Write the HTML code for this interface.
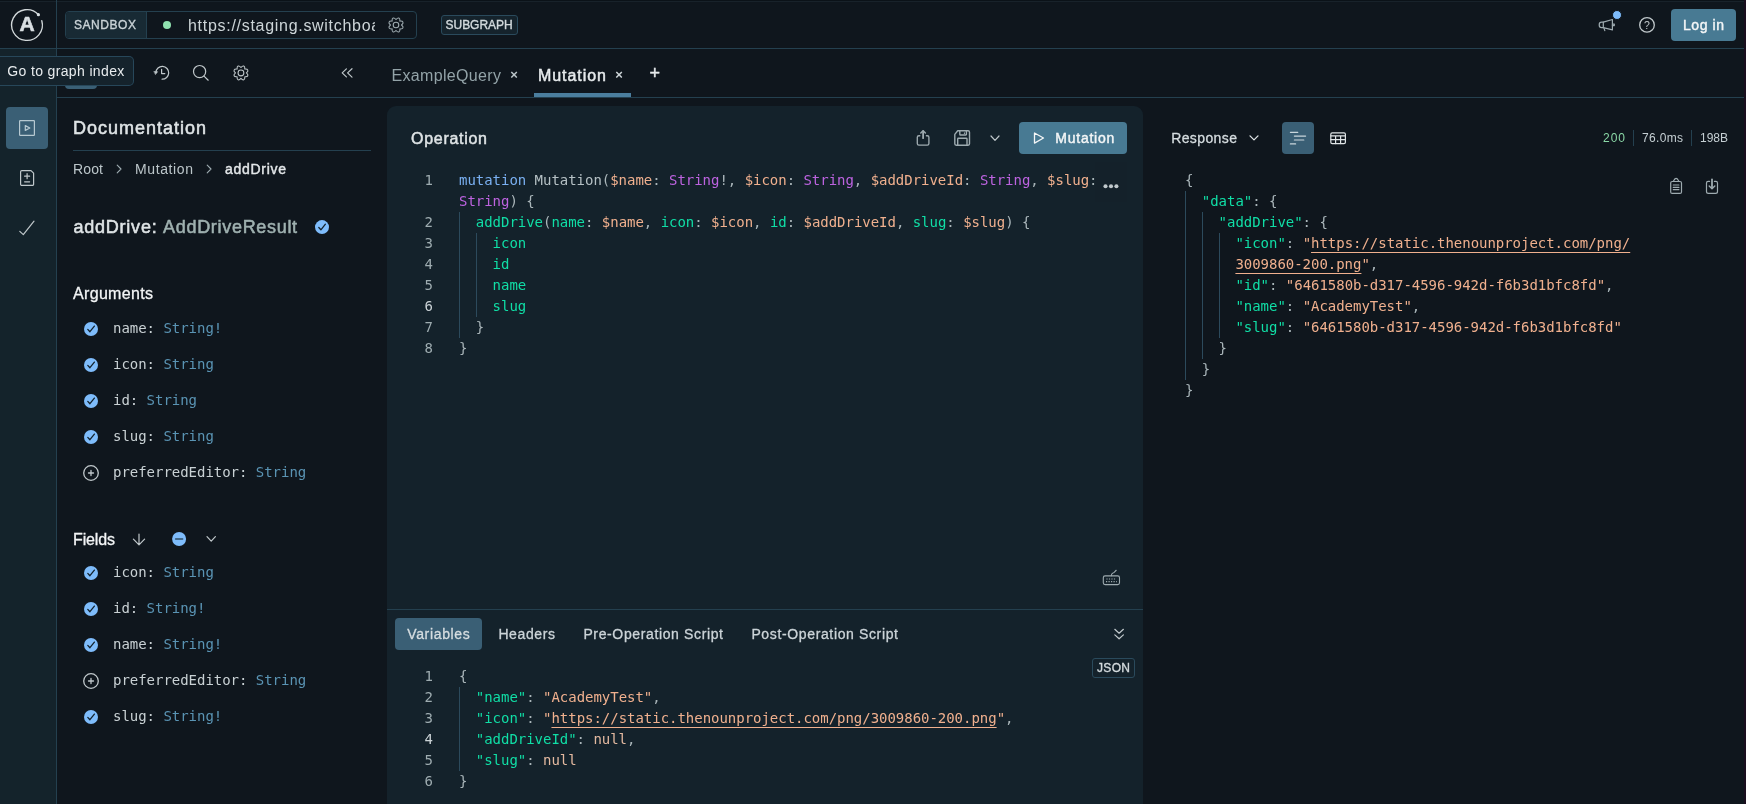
<!DOCTYPE html>
<html lang="en"><head><meta charset="utf-8"><title>Apollo Sandbox</title>
<style>
html,body{margin:0;padding:0}
body{width:1746px;height:804px;overflow:hidden;position:relative;background:#0f161d;font-family:"Liberation Sans", sans-serif}
#root{position:absolute;left:0;top:0;width:1746px;height:804px;will-change:transform}
#root>div,#root>svg,.ab{position:absolute}
.t{white-space:pre}
.code{font-family:"DejaVu Sans Mono", "Liberation Mono", monospace;font-size:14px;line-height:21px;white-space:pre;height:21px;letter-spacing:-0.029px}
.code span{font-family:inherit}
.u{text-decoration:underline;text-decoration-thickness:1px;text-underline-offset:3.5px}
</style></head><body><div id="root">
<div style="left:0px;top:0px;width:1744px;height:1px;background:#0b1218;"></div>
<div style="left:0px;top:1px;width:1744px;height:1px;background:#18222a;"></div>
<div style="left:1744px;top:0px;width:2px;height:804px;background:#1a0e1e;"></div>
<div style="left:0px;top:49px;width:56px;height:755px;background:#14232b;"></div>
<div style="left:56px;top:0px;width:1px;height:804px;background:#24404f;"></div>
<div style="left:0px;top:48px;width:1744px;height:1px;background:#24404f;"></div>
<div style="left:57px;top:97px;width:1687px;height:1px;background:#24404f;"></div>
<div style="left:387px;top:106px;width:756px;height:698px;background:#14222b;border-radius:9px 9px 0 0;"></div>
<div style="left:387px;top:609px;width:756px;height:1px;background:#24404f;"></div>
<div style="left:65px;top:11px;width:352px;height:28px;border:1px solid #24404f;box-sizing:border-box;border-radius:4px;"></div>
<div style="left:66px;top:12px;width:80px;height:26px;background:#182a34;border-radius:3px 0 0 3px;"></div>
<div style="left:146px;top:12px;width:1px;height:26px;background:#24404f;"></div>
<div class="t" style='left:74px;top:16.0px;height:18px;line-height:18px;font-family:"Liberation Sans", sans-serif;font-size:12px;font-weight:400;color:#c9d2d6;-webkit-text-stroke:0.36px #c9d2d6;letter-spacing:0.552px;'>SANDBOX</div>
<div style="left:162.8px;top:20.9px;width:8.4px;height:8.4px;background:#90e2b0;border-radius:5px;"></div>
<div class="t" style='left:188px;top:13.899999999999999px;height:24px;line-height:24px;font-family:"Liberation Sans", sans-serif;font-size:16px;font-weight:400;color:#cdd5d8;letter-spacing:0.708px;width:187.4px;overflow:hidden;'>https://staging.switchboa</div>
<div style="left:441px;top:15px;width:77px;height:20px;background:#15232c;border:1px solid #2a4a5c;box-sizing:border-box;border-radius:3px;"></div>
<div class="t" style='left:445.6px;top:16.2px;height:18px;line-height:18px;font-family:"Liberation Sans", sans-serif;font-size:12px;font-weight:400;color:#d3dadd;-webkit-text-stroke:0.36px #d3dadd;letter-spacing:-0.051px;'>SUBGRAPH</div>
<div style="left:1671px;top:9px;width:65px;height:32px;background:#487a93;border-radius:4px;"></div>
<div class="t" style='left:1683px;top:14.5px;height:21px;line-height:21px;font-family:"Liberation Sans", sans-serif;font-size:14px;font-weight:400;color:#f4f6f7;-webkit-text-stroke:0.42px #f4f6f7;letter-spacing:0.569px;'>Log in</div>
<div style="left:1613px;top:11px;width:8px;height:8px;background:#7ebcfb;border-radius:4px;"></div>
<div style="left:65px;top:60px;width:32px;height:29px;background:#3a5f75;border-radius:4px;"></div>
<div style="left:0px;top:56px;width:134px;height:30px;background:#15232c;border:1px solid #27475a;box-sizing:border-box;border-radius:4px;border-left:none;border-radius:0 5px 5px 0;"></div>
<div class="t" style='left:7.3px;top:61.0px;height:21px;line-height:21px;font-family:"Liberation Sans", sans-serif;font-size:14px;font-weight:400;color:#e8ecee;letter-spacing:0.356px;'>Go to graph index</div>
<div class="t" style='left:391.5px;top:63.900000000000006px;height:24px;line-height:24px;font-family:"Liberation Sans", sans-serif;font-size:16px;font-weight:400;color:#93a3a8;letter-spacing:0.334px;'>ExampleQuery</div>
<div class="t" style='left:510.3px;top:64.9px;height:20px;line-height:20px;font-family:"Liberation Sans", sans-serif;font-size:13px;font-weight:700;color:#bcc6ca;'>×</div>
<div class="t" style='left:538px;top:63.900000000000006px;height:24px;line-height:24px;font-family:"Liberation Sans", sans-serif;font-size:16px;font-weight:400;color:#e6eaec;-webkit-text-stroke:0.48px #e6eaec;letter-spacing:0.946px;'>Mutation</div>
<div class="t" style='left:615.3px;top:64.9px;height:20px;line-height:20px;font-family:"Liberation Sans", sans-serif;font-size:13px;font-weight:700;color:#cfd6d9;'>×</div>
<div class="t" style='left:649.5px;top:60.0px;height:27px;line-height:27px;font-family:"Liberation Sans", sans-serif;font-size:18px;font-weight:400;color:#e6eaec;-webkit-text-stroke:0.40px #e6eaec;'>+</div>
<div style="left:534px;top:93px;width:97px;height:4px;background:#4b7e9e;"></div>
<div style="left:6px;top:107px;width:42px;height:42px;background:#3a5f75;border-radius:4px;"></div>
<div class="t" style='left:73px;top:114.5px;height:27px;line-height:27px;font-family:"Liberation Sans", sans-serif;font-size:18px;font-weight:400;color:#dfe4e6;-webkit-text-stroke:0.54px #dfe4e6;letter-spacing:0.993px;'>Documentation</div>
<div style="left:73px;top:150px;width:298px;height:1px;background:#24404f;"></div>
<div class="t" style='left:73px;top:158.5px;height:21px;line-height:21px;font-family:"Liberation Sans", sans-serif;font-size:14px;font-weight:400;color:#bcc6ca;letter-spacing:0.141px;'>Root</div>
<div class="t" style='left:135px;top:158.5px;height:21px;line-height:21px;font-family:"Liberation Sans", sans-serif;font-size:14px;font-weight:400;color:#bcc6ca;letter-spacing:0.614px;'>Mutation</div>
<div class="t" style='left:225px;top:158.5px;height:21px;line-height:21px;font-family:"Liberation Sans", sans-serif;font-size:14px;font-weight:400;color:#e3e7e9;-webkit-text-stroke:0.42px #e3e7e9;letter-spacing:0.710px;'>addDrive</div>
<div class="t" style='left:73.4px;top:213.5px;height:27px;line-height:27px;font-family:"Liberation Sans", sans-serif;font-size:18px;font-weight:400;color:#dfe4e6;-webkit-text-stroke:0.54px #dfe4e6;letter-spacing:0.782px;'>addDrive:</div>
<div class="t" style='left:163.1px;top:213.5px;height:27px;line-height:27px;font-family:"Liberation Sans", sans-serif;font-size:18px;font-weight:400;color:#9fb1b0;-webkit-text-stroke:0.54px #9fb1b0;letter-spacing:0.688px;'>AddDriveResult</div>
<div class="t" style='left:73px;top:281.8px;height:24px;line-height:24px;font-family:"Liberation Sans", sans-serif;font-size:16px;font-weight:400;color:#f3f5f6;letter-spacing:0.328px;-webkit-text-stroke:0.3px #f3f5f6;'>Arguments</div>
<div class="t" style='left:73px;top:527.8px;height:24px;line-height:24px;font-family:"Liberation Sans", sans-serif;font-size:16px;font-weight:400;color:#f3f5f6;letter-spacing:-0.138px;-webkit-text-stroke:0.3px #f3f5f6;'>Fields</div>
<div class="t" style='left:411px;top:126.9px;height:24px;line-height:24px;font-family:"Liberation Sans", sans-serif;font-size:16px;font-weight:400;color:#dfe4e6;-webkit-text-stroke:0.48px #dfe4e6;letter-spacing:0.717px;'>Operation</div>
<div style="left:1019px;top:122px;width:108px;height:32px;background:#487a93;border-radius:4px;"></div>
<div class="t" style='left:1055.3px;top:127.80000000000001px;height:21px;line-height:21px;font-family:"Liberation Sans", sans-serif;font-size:14px;font-weight:400;color:#f4f6f7;-webkit-text-stroke:0.42px #f4f6f7;letter-spacing:0.757px;'>Mutation</div>
<div style="left:395px;top:618px;width:87px;height:32px;background:#3a5f75;border-radius:4px;"></div>
<div class="t" style='left:407.2px;top:623.7px;height:21px;line-height:21px;font-family:"Liberation Sans", sans-serif;font-size:14px;font-weight:400;color:#d5dde0;-webkit-text-stroke:0.31px #d5dde0;letter-spacing:0.659px;'>Variables</div>
<div class="t" style='left:498.4px;top:623.7px;height:21px;line-height:21px;font-family:"Liberation Sans", sans-serif;font-size:14px;font-weight:400;color:#ccd4d8;-webkit-text-stroke:0.31px #ccd4d8;letter-spacing:0.613px;'>Headers</div>
<div class="t" style='left:583.4px;top:623.7px;height:21px;line-height:21px;font-family:"Liberation Sans", sans-serif;font-size:14px;font-weight:400;color:#ccd4d8;-webkit-text-stroke:0.31px #ccd4d8;letter-spacing:0.631px;'>Pre-Operation Script</div>
<div class="t" style='left:751.4px;top:623.7px;height:21px;line-height:21px;font-family:"Liberation Sans", sans-serif;font-size:14px;font-weight:400;color:#ccd4d8;-webkit-text-stroke:0.31px #ccd4d8;letter-spacing:0.638px;'>Post-Operation Script</div>
<div style="left:1092px;top:658px;width:43px;height:20px;border:1px solid #2a4a5c;box-sizing:border-box;border-radius:3px;"></div>
<div class="t" style='left:1097px;top:659.0px;height:18px;line-height:18px;font-family:"Liberation Sans", sans-serif;font-size:12px;font-weight:400;color:#d3dadd;-webkit-text-stroke:0.36px #d3dadd;letter-spacing:0.328px;'>JSON</div>
<div class="t" style='left:1171.2px;top:127.69999999999999px;height:21px;line-height:21px;font-family:"Liberation Sans", sans-serif;font-size:14px;font-weight:400;color:#d5dcdf;-webkit-text-stroke:0.31px #d5dcdf;letter-spacing:0.393px;'>Response</div>
<div style="left:1282px;top:122px;width:32px;height:32px;background:#3a5f75;border-radius:4px;"></div>
<div class="t" style='left:1603px;top:129.0px;height:18px;line-height:18px;font-family:"Liberation Sans", sans-serif;font-size:12px;font-weight:400;color:#8ad8a6;letter-spacing:0.984px;'>200</div>
<div style="left:1633px;top:130px;width:1px;height:16px;background:#24404f;"></div>
<div class="t" style='left:1642px;top:129.0px;height:18px;line-height:18px;font-family:"Liberation Sans", sans-serif;font-size:12px;font-weight:400;color:#c5cfd3;letter-spacing:0.328px;'>76.0ms</div>
<div style="left:1691px;top:130px;width:1px;height:16px;background:#24404f;"></div>
<div class="t" style='left:1700px;top:129.0px;height:18px;line-height:18px;font-family:"Liberation Sans", sans-serif;font-size:12px;font-weight:400;color:#c5cfd3;letter-spacing:-0.010px;'>198B</div>
<div class="code" style="left:403px;width:30px;text-align:right;top:169.5px;color:#9eacb0">1</div>
<div class="code" style="left:403px;width:30px;text-align:right;top:211.5px;color:#9eacb0">2</div>
<div class="code" style="left:403px;width:30px;text-align:right;top:232.5px;color:#9eacb0">3</div>
<div class="code" style="left:403px;width:30px;text-align:right;top:253.5px;color:#9eacb0">4</div>
<div class="code" style="left:403px;width:30px;text-align:right;top:274.5px;color:#9eacb0">5</div>
<div class="code" style="left:403px;width:30px;text-align:right;top:295.5px;color:#cbd3d6">6</div>
<div class="code" style="left:403px;width:30px;text-align:right;top:316.5px;color:#9eacb0">7</div>
<div class="code" style="left:403px;width:30px;text-align:right;top:337.5px;color:#9eacb0">8</div>
<div class="code" style="left:459px;top:169.5px;"><span style="color:#7ab0f2">mutation</span><span style="color:#b5c0c4"> Mutation</span><span style="color:#aab6ba">(</span><span style="color:#f0b08e">$name</span><span style="color:#aab6ba">:</span><span style="color:#bd63e0"> String</span><span style="color:#aab6ba">!, </span><span style="color:#f0b08e">$icon</span><span style="color:#aab6ba">:</span><span style="color:#bd63e0"> String</span><span style="color:#aab6ba">, </span><span style="color:#f0b08e">$addDriveId</span><span style="color:#aab6ba">:</span><span style="color:#bd63e0"> String</span><span style="color:#aab6ba">, </span><span style="color:#f0b08e">$slug</span><span style="color:#aab6ba">:</span></div>
<div class="code" style="left:459px;top:190.5px;"><span style="color:#bd63e0">String</span><span style="color:#aab6ba">) {</span></div>
<div class="code" style="left:459px;top:211.5px;"><span style="color:#10dea6">  addDrive</span><span style="color:#aab6ba">(</span><span style="color:#10dea6">name</span><span style="color:#aab6ba">: </span><span style="color:#f0b08e">$name</span><span style="color:#aab6ba">, </span><span style="color:#10dea6">icon</span><span style="color:#aab6ba">: </span><span style="color:#f0b08e">$icon</span><span style="color:#aab6ba">, </span><span style="color:#10dea6">id</span><span style="color:#aab6ba">: </span><span style="color:#f0b08e">$addDriveId</span><span style="color:#aab6ba">, </span><span style="color:#10dea6">slug</span><span style="color:#aab6ba">: </span><span style="color:#f0b08e">$slug</span><span style="color:#aab6ba">) {</span></div>
<div class="code" style="left:459px;top:232.5px;"><span style="color:#10dea6">    icon</span></div>
<div class="code" style="left:459px;top:253.5px;"><span style="color:#10dea6">    id</span></div>
<div class="code" style="left:459px;top:274.5px;"><span style="color:#10dea6">    name</span></div>
<div class="code" style="left:459px;top:295.5px;"><span style="color:#10dea6">    slug</span></div>
<div class="code" style="left:459px;top:316.5px;"><span style="color:#aab6ba">  }</span></div>
<div class="code" style="left:459px;top:337.5px;"><span style="color:#aab6ba">}</span></div>
<div style="left:459px;top:212px;width:1px;height:126px;background:#2c4a5c;"></div>
<div style="left:476px;top:233px;width:1px;height:84px;background:#2c4a5c;"></div>
<div class="code" style="left:403px;width:30px;text-align:right;top:665.5px;color:#9eacb0">1</div>
<div class="code" style="left:403px;width:30px;text-align:right;top:686.5px;color:#9eacb0">2</div>
<div class="code" style="left:403px;width:30px;text-align:right;top:707.5px;color:#9eacb0">3</div>
<div class="code" style="left:403px;width:30px;text-align:right;top:728.5px;color:#cbd3d6">4</div>
<div class="code" style="left:403px;width:30px;text-align:right;top:749.5px;color:#9eacb0">5</div>
<div class="code" style="left:403px;width:30px;text-align:right;top:770.5px;color:#9eacb0">6</div>
<div class="code" style="left:459px;top:665.5px;"><span style="color:#aab6ba">{</span></div>
<div class="code" style="left:459px;top:686.5px;"><span style="color:#aab6ba">  </span><span style="color:#10dea6">"name"</span><span style="color:#aab6ba">: </span><span style="color:#f0b08e">"AcademyTest</span><span style="color:#f0b08e">"</span><span style="color:#aab6ba">,</span></div>
<div class="code" style="left:459px;top:707.5px;"><span style="color:#aab6ba">  </span><span style="color:#10dea6">"icon"</span><span style="color:#aab6ba">: </span><span style="color:#f0b08e">"</span><span class="u" style="color:#f0b08e">https://static.thenounproject.com/png/3009860-200.png</span><span style="color:#f0b08e">"</span><span style="color:#aab6ba">,</span></div>
<div class="code" style="left:459px;top:728.5px;"><span style="color:#aab6ba">  </span><span style="color:#10dea6">"addDriveId"</span><span style="color:#aab6ba">: </span><span style="color:#e3b9a0">null</span><span style="color:#aab6ba">,</span></div>
<div class="code" style="left:459px;top:749.5px;"><span style="color:#aab6ba">  </span><span style="color:#10dea6">"slug"</span><span style="color:#aab6ba">: </span><span style="color:#e3b9a0">null</span></div>
<div class="code" style="left:459px;top:770.5px;"><span style="color:#aab6ba">}</span></div>
<div style="left:459px;top:687px;width:1px;height:84px;background:#2c4a5c;"></div>
<div class="code" style="left:1185px;top:169.5px;"><span style="color:#aab6ba">{</span></div>
<div class="code" style="left:1185px;top:190.5px;"><span style="color:#aab6ba">  </span><span style="color:#10dea6">"data"</span><span style="color:#aab6ba">: </span><span style="color:#aab6ba">{</span></div>
<div class="code" style="left:1185px;top:211.5px;"><span style="color:#aab6ba">    </span><span style="color:#10dea6">"addDrive"</span><span style="color:#aab6ba">: </span><span style="color:#aab6ba">{</span></div>
<div class="code" style="left:1185px;top:232.5px;"><span style="color:#aab6ba">      </span><span style="color:#10dea6">"icon"</span><span style="color:#aab6ba">: </span><span style="color:#f0b08e">"</span><span class="u" style="color:#f0b08e">https://static.thenounproject.com/png/</span></div>
<div class="code" style="left:1185px;top:253.5px;"><span style="color:#aab6ba">      </span><span class="u" style="color:#f0b08e">3009860-200.png</span><span style="color:#f0b08e">"</span><span style="color:#aab6ba">,</span></div>
<div class="code" style="left:1185px;top:274.5px;"><span style="color:#aab6ba">      </span><span style="color:#10dea6">"id"</span><span style="color:#aab6ba">: </span><span style="color:#f0b08e">"6461580b-d317-4596-942d-f6b3d1bfc8fd</span><span style="color:#f0b08e">"</span><span style="color:#aab6ba">,</span></div>
<div class="code" style="left:1185px;top:295.5px;"><span style="color:#aab6ba">      </span><span style="color:#10dea6">"name"</span><span style="color:#aab6ba">: </span><span style="color:#f0b08e">"AcademyTest</span><span style="color:#f0b08e">"</span><span style="color:#aab6ba">,</span></div>
<div class="code" style="left:1185px;top:316.5px;"><span style="color:#aab6ba">      </span><span style="color:#10dea6">"slug"</span><span style="color:#aab6ba">: </span><span style="color:#f0b08e">"6461580b-d317-4596-942d-f6b3d1bfc8fd</span><span style="color:#f0b08e">"</span></div>
<div class="code" style="left:1185px;top:337.5px;"><span style="color:#aab6ba">    }</span></div>
<div class="code" style="left:1185px;top:358.5px;"><span style="color:#aab6ba">  }</span></div>
<div class="code" style="left:1185px;top:379.5px;"><span style="color:#aab6ba">}</span></div>
<div style="left:1185px;top:191px;width:1px;height:189px;background:#2c4a5c;"></div>
<div style="left:1202px;top:212px;width:1px;height:147px;background:#2c4a5c;"></div>
<div style="left:1219px;top:233px;width:1px;height:105px;background:#2c4a5c;"></div>
<div class="code" style="left:113px;top:317.5px;"><span style="color:#c9d1d4">name: </span><span style="color:#5a94b4">String!</span></div>
<div class="code" style="left:113px;top:353.5px;"><span style="color:#c9d1d4">icon: </span><span style="color:#5a94b4">String</span></div>
<div class="code" style="left:113px;top:389.5px;"><span style="color:#c9d1d4">id: </span><span style="color:#5a94b4">String</span></div>
<div class="code" style="left:113px;top:425.5px;"><span style="color:#c9d1d4">slug: </span><span style="color:#5a94b4">String</span></div>
<div class="code" style="left:113px;top:461.5px;"><span style="color:#c9d1d4">preferredEditor: </span><span style="color:#5a94b4">String</span></div>
<div class="code" style="left:113px;top:561.5px;"><span style="color:#c9d1d4">icon: </span><span style="color:#5a94b4">String</span></div>
<div class="code" style="left:113px;top:597.5px;"><span style="color:#c9d1d4">id: </span><span style="color:#5a94b4">String!</span></div>
<div class="code" style="left:113px;top:633.5px;"><span style="color:#c9d1d4">name: </span><span style="color:#5a94b4">String!</span></div>
<div class="code" style="left:113px;top:669.5px;"><span style="color:#c9d1d4">preferredEditor: </span><span style="color:#5a94b4">String</span></div>
<div class="code" style="left:113px;top:705.5px;"><span style="color:#c9d1d4">slug: </span><span style="color:#5a94b4">String!</span></div>
<svg style="left:0;top:0;pointer-events:none;" width="1746" height="804" viewBox="0 0 1746 804" fill="none" stroke="#d2d8da" stroke-width="1.35" stroke-linecap="round" stroke-linejoin="round"><path d="M38.44 14.70A15.4 15.4 0 1 0 41.80 20.76"/><circle cx="38.4" cy="14.7" r="1.6" fill="#d9dfe2" stroke="none"/></svg>
<div class="t" style='left:19.6px;top:7.899999999999999px;height:32px;line-height:32px;font-family:"Liberation Sans", sans-serif;font-size:21px;font-weight:700;color:#d9dfe2;width:15px;text-align:center;-webkit-text-stroke:0.6px #d9dfe2;'>A</div>
<svg style="left:0;top:0;pointer-events:none;" width="1746" height="804" viewBox="0 0 1746 804" fill="none" stroke="#9eabb0" stroke-width="1.05" stroke-linecap="round" stroke-linejoin="round"><path d="M396.00 19.50C398.19 16.84 400.22 17.69 399.89 21.11C403.31 20.78 404.16 22.81 401.50 25.00C404.16 27.19 403.31 29.22 399.89 28.89C400.22 32.31 398.19 33.16 396.00 30.50C393.81 33.16 391.78 32.31 392.11 28.89C388.69 29.22 387.84 27.19 390.50 25.00C387.84 22.81 388.69 20.78 392.11 21.11C391.78 17.69 393.81 16.84 396.00 19.50Z"/><circle cx="396" cy="25" r="2.8"/></svg>
<svg style="left:0;top:0;pointer-events:none;" width="1746" height="804" viewBox="0 0 1746 804" fill="none" stroke="#c0c8cb" stroke-width="1.2" stroke-linecap="round" stroke-linejoin="round"><path d="M155.91 72.47A6.4 6.4 0 1 1 162.08 79.20"/><path d="M154.2 71.5L157.6 71.7L155.7 74.3Z" fill="#c0c8cb" stroke-width="0.6"/><path d="M161.6 69.3V73.6H164.8"/></svg>
<svg style="left:0;top:0;pointer-events:none;" width="1746" height="804" viewBox="0 0 1746 804" fill="none" stroke="#c0c8cb" stroke-width="1.2" stroke-linecap="round" stroke-linejoin="round"><circle cx="199.6" cy="71.6" r="6.1"/><path d="M204 76.1L208.2 80.2"/></svg>
<svg style="left:0;top:0;pointer-events:none;" width="1746" height="804" viewBox="0 0 1746 804" fill="none" stroke="#c0c8cb" stroke-width="1.05" stroke-linecap="round" stroke-linejoin="round"><path d="M240.95 67.50C243.10 64.91 245.11 65.74 244.80 69.10C248.16 68.79 248.99 70.80 246.40 72.95C248.99 75.10 248.16 77.11 244.80 76.80C245.11 80.16 243.10 80.99 240.95 78.40C238.80 80.99 236.79 80.16 237.10 76.80C233.74 77.11 232.91 75.10 235.50 72.95C232.91 70.80 233.74 68.79 237.10 69.10C236.79 65.74 238.80 64.91 240.95 67.50Z"/><circle cx="240.95" cy="72.95" r="2.9"/></svg>
<svg style="left:0;top:0;pointer-events:none;" width="1746" height="804" viewBox="0 0 1746 804" fill="none" stroke="#c0c8cb" stroke-width="1.2" stroke-linecap="round" stroke-linejoin="round"><path d="M346.4 68.9L342.2 72.9L346.4 76.9M352 68.7L347.6 72.9L352 77.1"/></svg>
<svg style="left:0;top:0;pointer-events:none;" width="1746" height="804" viewBox="0 0 1746 804" fill="none" stroke="#c0c8cb" stroke-width="1.3" stroke-linecap="round" stroke-linejoin="round"><circle cx="1647" cy="24.9" r="7.3"/></svg>
<div class="t" style='left:1643.5px;top:17.3px;height:16px;line-height:16px;font-family:"Liberation Sans", sans-serif;font-size:10.5px;font-weight:400;color:#c0c8cb;width:7px;text-align:center;'>?</div>
<svg style="left:0;top:0;pointer-events:none;" width="1746" height="804" viewBox="0 0 1746 804" fill="none" stroke="#9eabb0" stroke-width="1.2" stroke-linecap="round" stroke-linejoin="round"><path d="M1603.3 22.2L1612.4 19.5V29.9L1603.3 27.6Z"/><path d="M1603.3 22.2H1601.6A2.4 2.7 0 0 0 1601.6 27.6H1603.3"/><path d="M1612.4 24.1H1614.3V25.6H1612.4"/><path d="M1603.9 27.9L1604.8 30.6"/></svg>
<div style="left:1612px;top:10px;width:8px;height:8px;border-radius:50%;background:#7ebcfb;border:1px solid #0f161d"></div>
<svg style="left:0;top:0;pointer-events:none;" width="1746" height="804" viewBox="0 0 1746 804" fill="none" stroke="#b7c9d1" stroke-width="1.2" stroke-linecap="round" stroke-linejoin="round"><rect x="19.6" y="120.6" width="14.8" height="14.8" rx="0.6"/><path d="M25.3 125.6V130.4L29.8 128Z"/></svg>
<svg style="left:0;top:0;pointer-events:none;" width="1746" height="804" viewBox="0 0 1746 804" fill="none" stroke="#c0c8cb" stroke-width="1.2" stroke-linecap="round" stroke-linejoin="round"><path d="M20.6 171.8A1.2 1.2 0 0 1 21.8 170.6H31L33.6 173.2V184.2A1.2 1.2 0 0 1 32.4 185.4H21.8A1.2 1.2 0 0 1 20.6 184.2Z"/><path d="M24.6 176.2H29.6M27.1 173.7V178.7M24.6 181.8H29.6"/></svg>
<svg style="left:0;top:0;pointer-events:none;" width="1746" height="804" viewBox="0 0 1746 804" fill="none" stroke="#c0c8cb" stroke-width="1.2" stroke-linecap="round" stroke-linejoin="round"><path d="M19.8 231.4L23.3 234.6L34 221.2"/></svg>
<svg style="left:0;top:0;pointer-events:none;" width="1746" height="804" viewBox="0 0 1746 804" fill="none" stroke="#9eacb1" stroke-width="1.1" stroke-linecap="round" stroke-linejoin="round"><path d="M117.2 165.2L121 169L117.2 172.8M207.2 165.2L211 169L207.2 172.8"/></svg>
<svg style="left:0;top:0;pointer-events:none;" width="1746" height="804" viewBox="0 0 1746 804" fill="none" stroke="#13222c" stroke-width="1.3" stroke-linecap="round" stroke-linejoin="round"><circle cx="322" cy="227.1" r="7" fill="#7ebcfb" stroke="none"/><path d="M318.8 227.5L320.9 229.79999999999998L325.4 224.2"/><circle cx="91" cy="329" r="7" fill="#7ebcfb" stroke="none"/><path d="M87.8 329.4L89.9 331.7L94.4 326.1"/><circle cx="91" cy="365" r="7" fill="#7ebcfb" stroke="none"/><path d="M87.8 365.4L89.9 367.7L94.4 362.1"/><circle cx="91" cy="401" r="7" fill="#7ebcfb" stroke="none"/><path d="M87.8 401.4L89.9 403.7L94.4 398.1"/><circle cx="91" cy="437" r="7" fill="#7ebcfb" stroke="none"/><path d="M87.8 437.4L89.9 439.7L94.4 434.1"/><circle cx="91" cy="473" r="7.3" stroke="#c0c8cb"/><path d="M88.5 473H93.5M91 470.5V475.5" stroke="#c0c8cb"/><circle cx="91" cy="573" r="7" fill="#7ebcfb" stroke="none"/><path d="M87.8 573.4L89.9 575.7L94.4 570.1"/><circle cx="91" cy="609" r="7" fill="#7ebcfb" stroke="none"/><path d="M87.8 609.4L89.9 611.7L94.4 606.1"/><circle cx="91" cy="645" r="7" fill="#7ebcfb" stroke="none"/><path d="M87.8 645.4L89.9 647.7L94.4 642.1"/><circle cx="91" cy="681" r="7.3" stroke="#c0c8cb"/><path d="M88.5 681H93.5M91 678.5V683.5" stroke="#c0c8cb"/><circle cx="91" cy="717" r="7" fill="#7ebcfb" stroke="none"/><path d="M87.8 717.4L89.9 719.7L94.4 714.1"/></svg>
<svg style="left:0;top:0;pointer-events:none;" width="1746" height="804" viewBox="0 0 1746 804" fill="none" stroke="#c0c8cb" stroke-width="1.2" stroke-linecap="round" stroke-linejoin="round"><path d="M139 534V544.6M133.4 539.2L139 544.8L144.6 539.2"/><path d="M207 536.6L211.2 541.2L215.4 536.6"/></svg>
<svg style="left:0;top:0;pointer-events:none;" width="1746" height="804" viewBox="0 0 1746 804" fill="none" stroke="#2f4d66" stroke-width="1.5" stroke-linecap="round" stroke-linejoin="round"><circle cx="179.1" cy="539" r="7" fill="#7ebcfb" stroke="none"/><path d="M175.6 539H182.6"/></svg>
<svg style="left:0;top:0;pointer-events:none;" width="1746" height="804" viewBox="0 0 1746 804" fill="none" stroke="#9eabb0" stroke-width="1.35" stroke-linecap="round" stroke-linejoin="round"><path d="M919.8 135.7H918.9A1.6 1.6 0 0 0 917.3 137.3V143.5A1.6 1.6 0 0 0 918.9 145.1H927.3A1.6 1.6 0 0 0 928.9 143.5V137.3A1.6 1.6 0 0 0 927.3 135.7H926.4"/><path d="M923.1 138.2V131.2" stroke-width="1.8"/><path d="M920.8 133L923.1 130.7L925.4 133" stroke-width="1.5"/></svg>
<svg style="left:0;top:0;pointer-events:none;" width="1746" height="804" viewBox="0 0 1746 804" fill="none" stroke="#9eabb0" stroke-width="1.4" stroke-linecap="round" stroke-linejoin="round"><path d="M957.7 130.8H968.1A1.4 1.4 0 0 1 969.5 132.2V143.8A1.4 1.4 0 0 1 968.1 145.2H956.2A1.4 1.4 0 0 1 954.8 143.8V134.4Z"/><path d="M957.7 145V139A0.7 0.7 0 0 1 958.4 138.3H966.3A0.7 0.7 0 0 1 967 139V145"/><path d="M959.8 131V134.4A0.6 0.6 0 0 0 960.4 135H965.8A0.6 0.6 0 0 0 966.4 134.4V131"/><path d="M964.4 132.9V133.5" stroke-width="1.1"/></svg>
<svg style="left:0;top:0;pointer-events:none;" width="1746" height="804" viewBox="0 0 1746 804" fill="none" stroke="#c0c8cb" stroke-width="1.2" stroke-linecap="round" stroke-linejoin="round"><path d="M991 136L995 140.3L999 136"/></svg>
<svg style="left:0;top:0;pointer-events:none;" width="1746" height="804" viewBox="0 0 1746 804" fill="none" stroke="#f4f6f7" stroke-width="1.3" stroke-linecap="round" stroke-linejoin="round"><path d="M1034.5 133V143.1L1043.5 138Z"/></svg>
<div style="left:1095px;top:162px;width:32px;height:40px;background:#14212a;"></div>
<svg style="left:0;top:0;pointer-events:none;fill:#c0c8cb;" width="1746" height="804" viewBox="0 0 1746 804" fill="none" stroke="none" stroke-width="0" stroke-linecap="round" stroke-linejoin="round"><circle cx="1105.5" cy="186.2" r="2.05"/><circle cx="1111" cy="186.2" r="2.05"/><circle cx="1116.4" cy="186.2" r="2.05"/></svg>
<svg style="left:0;top:0;pointer-events:none;" width="1746" height="804" viewBox="0 0 1746 804" fill="none" stroke="#9eabb0" stroke-width="1.1" stroke-linecap="round" stroke-linejoin="round"><rect x="1103.3" y="575.9" width="16.2" height="8.7" rx="1.8"/><path d="M1111.3 575.7C1111.3 572.6 1113 573.4 1114.2 572.4C1115 571.7 1115.4 570.9 1116.2 570.3"/><path d="M1106.4 579H1116.4M1106 581.6H1116.8" stroke-dasharray="1.2 1.3" stroke-linecap="butt"/></svg>
<svg style="left:0;top:0;pointer-events:none;" width="1746" height="804" viewBox="0 0 1746 804" fill="none" stroke="#c0c8cb" stroke-width="1.2" stroke-linecap="round" stroke-linejoin="round"><path d="M1114.8 629.3L1119.1 633.2L1123.4 629.3M1114.8 634.9L1119.1 638.8L1123.4 634.9"/></svg>
<svg style="left:0;top:0;pointer-events:none;" width="1746" height="804" viewBox="0 0 1746 804" fill="none" stroke="#dfe4e6" stroke-width="1.3" stroke-linecap="round" stroke-linejoin="round"><path d="M1250 135.9L1254 139.9L1258 135.9"/></svg>
<svg style="left:0;top:0;pointer-events:none;" width="1746" height="804" viewBox="0 0 1746 804" fill="none" stroke="#c9d6dc" stroke-width="1.2" stroke-linecap="round" stroke-linejoin="round"><path d="M1290.4 132.3H1297.8M1294.4 136.1H1305.6M1294.4 140H1303.8M1290.4 143.9H1295.6"/></svg>
<svg style="left:0;top:0;pointer-events:none;" width="1746" height="804" viewBox="0 0 1746 804" fill="none" stroke="#dfe4e6" stroke-width="1.2" stroke-linecap="round" stroke-linejoin="round"><rect x="1330.8" y="132.8" width="14.6" height="10.8" rx="1.4"/><path d="M1330.8 135.9H1345.4M1330.8 139.7H1345.4M1335.6 135.9V143.6M1340.6 135.9V143.6"/></svg>
<svg style="left:0;top:0;pointer-events:none;" width="1746" height="804" viewBox="0 0 1746 804" fill="none" stroke="#9eabb0" stroke-width="1.2" stroke-linecap="round" stroke-linejoin="round"><rect x="1670.7" y="181.5" width="10.8" height="11.9" rx="1.5"/><path d="M1672.9 181.5C1673.7 181.5 1674.2 178.4 1676.1 178.4C1678 178.4 1678.5 181.5 1679.3 181.5"/><path d="M1673.3 185H1678.9M1673.3 187.4H1678.9M1673.3 189.7H1678.9"/></svg>
<svg style="left:0;top:0;pointer-events:none;" width="1746" height="804" viewBox="0 0 1746 804" fill="none" stroke="#9eabb0" stroke-width="1.2" stroke-linecap="round" stroke-linejoin="round"><path d="M1709.6 181.4H1708.1A1.6 1.6 0 0 0 1706.5 183V191.4A1.9 1.9 0 0 0 1708.4 193.3H1715.6A1.9 1.9 0 0 0 1717.5 191.4V183A1.6 1.6 0 0 0 1715.9 181.4H1714.4"/><path d="M1712 179.3V188" stroke-width="1.8"/><path d="M1709.2 185.9L1712 188.7L1714.8 185.9" stroke-width="1.4"/></svg>
</div></body></html>
